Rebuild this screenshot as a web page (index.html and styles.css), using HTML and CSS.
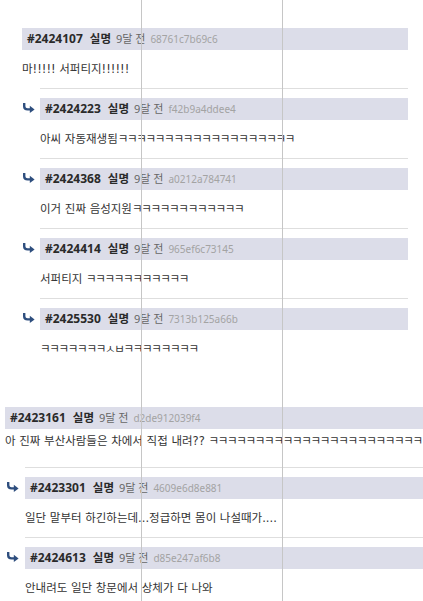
FILE: index.html
```html
<!DOCTYPE html>
<html lang="ko">
<head>
<meta charset="utf-8">
<title>댓글</title>
<link rel="stylesheet" href="styles.css">
</head>
<body>
<div class="page">

  <section class="thread thread--a">
    <article class="post">
      <div class="post-head"><span class="post-id">#2424107</span><span class="post-name">실명</span><span class="post-time">9달 전</span><span class="post-hash">68761c7b69c6</span></div>
      <p class="post-body">마!!!!! 서퍼티지!!!!!!</p>
    </article>

    <div class="reply">
      <svg class="reply-arrow" viewBox="0 0 13 10"><path d="M2.2 0.6 V3.2 Q2.2 6.4 5.6 6.4 H8.6" /><polygon points="7.8,2.8 12.6,6.4 7.8,10" /></svg>
      <article class="post">
        <div class="post-head"><span class="post-id">#2424223</span><span class="post-name">실명</span><span class="post-time">9달 전</span><span class="post-hash">f42b9a4ddee4</span></div>
        <p class="post-body">아씨 자동재생됨<span class="lol">ㅋㅋㅋㅋㅋㅋㅋㅋㅋㅋㅋㅋㅋㅋㅋㅋㅋㅋㅋ</span></p>
      </article>
    </div>

    <div class="reply">
      <svg class="reply-arrow" viewBox="0 0 13 10"><path d="M2.2 0.6 V3.2 Q2.2 6.4 5.6 6.4 H8.6" /><polygon points="7.8,2.8 12.6,6.4 7.8,10" /></svg>
      <article class="post">
        <div class="post-head"><span class="post-id">#2424368</span><span class="post-name">실명</span><span class="post-time">9달 전</span><span class="post-hash">a0212a784741</span></div>
        <p class="post-body">이거 진짜 음성지원<span class="lol">ㅋㅋㅋㅋㅋㅋㅋㅋㅋㅋㅋㅋ</span></p>
      </article>
    </div>

    <div class="reply">
      <svg class="reply-arrow" viewBox="0 0 13 10"><path d="M2.2 0.6 V3.2 Q2.2 6.4 5.6 6.4 H8.6" /><polygon points="7.8,2.8 12.6,6.4 7.8,10" /></svg>
      <article class="post">
        <div class="post-head"><span class="post-id">#2424414</span><span class="post-name">실명</span><span class="post-time">9달 전</span><span class="post-hash">965ef6c73145</span></div>
        <p class="post-body">서퍼티지 <span class="lol">ㅋㅋㅋㅋㅋㅋㅋㅋㅋㅋㅋ</span></p>
      </article>
    </div>

    <div class="reply">
      <svg class="reply-arrow" viewBox="0 0 13 10"><path d="M2.2 0.6 V3.2 Q2.2 6.4 5.6 6.4 H8.6" /><polygon points="7.8,2.8 12.6,6.4 7.8,10" /></svg>
      <article class="post">
        <div class="post-head"><span class="post-id">#2425530</span><span class="post-name">실명</span><span class="post-time">9달 전</span><span class="post-hash">7313b125a66b</span></div>
        <p class="post-body"><span class="lol">ㅋㅋㅋㅋㅋㅋㅋㅅㅂㅋㅋㅋㅋㅋㅋㅋㅋ</span></p>
      </article>
    </div>
  </section>

  <section class="thread thread--b">
    <article class="post">
      <div class="post-head"><span class="post-id">#2423161</span><span class="post-name">실명</span><span class="post-time">9달 전</span><span class="post-hash">d2de912039f4</span></div>
      <p class="post-body post-body--high">아 진짜 부산사람들은 차에서 직접 내려?? <span class="lol">ㅋㅋㅋㅋㅋㅋㅋㅋㅋㅋㅋㅋㅋㅋㅋㅋㅋㅋㅋㅋㅋㅋㅋ</span></p>
    </article>

    <div class="reply">
      <svg class="reply-arrow" viewBox="0 0 13 10"><path d="M2.2 0.6 V3.2 Q2.2 6.4 5.6 6.4 H8.6" /><polygon points="7.8,2.8 12.6,6.4 7.8,10" /></svg>
      <article class="post">
        <div class="post-head"><span class="post-id">#2423301</span><span class="post-name">실명</span><span class="post-time">9달 전</span><span class="post-hash">4609e6d8e881</span></div>
        <p class="post-body">일단 말부터 하긴하는데...정급하면 몸이 나설때가....</p>
      </article>
    </div>

    <div class="reply">
      <svg class="reply-arrow" viewBox="0 0 13 10"><path d="M2.2 0.6 V3.2 Q2.2 6.4 5.6 6.4 H8.6" /><polygon points="7.8,2.8 12.6,6.4 7.8,10" /></svg>
      <article class="post">
        <div class="post-head"><span class="post-id">#2424613</span><span class="post-name">실명</span><span class="post-time">9달 전</span><span class="post-hash">d85e247af6b8</span></div>
        <p class="post-body">안내려도 일단 창문에서 상체가 다 나와</p>
      </article>
    </div>
  </section>

  <div class="guide guide--left"></div>
  <div class="guide guide--right"></div>
</div>
</body>
</html>
```

FILE: styles.css
```css
html, body {
  margin: 0;
  background: #ffffff;
}

body {
  font-family: "Noto Sans", "Noto Sans CJK KR", sans-serif;
  color: #333333;
}

.page {
  position: relative;
  height: 601px;
  padding-top: 28px;
  box-sizing: border-box;
  overflow: hidden;
}

/* comment threads */
.thread--a {
  margin-left: 22px;
  width: 386px;
}

.thread--b {
  margin-left: 5px;
  margin-top: 39px;
  width: 418px;
}

/* post header bar */
.post-head {
  height: 22px;
  display: flex;
  align-items: baseline;
  padding-left: 5px;
  line-height: 22px;
  background: #dcdde9;
  white-space: nowrap;
  overflow: hidden;
}

.post-id {
  font-size: 12px;
  font-weight: 700;
  color: #2a2a2a;
  margin-right: 7px;
}

.post-name {
  font-size: 11.5px;
  font-weight: 700;
  color: #2a2a2a;
  margin-right: 5px;
}

.post-time {
  font-size: 11px;
  color: #666666;
  margin-right: 5px;
}

.post-hash {
  font-size: 10px;
  color: #a3a3a3;
}

/* post text */
.post-body {
  margin: 0;
  height: 38px;
  box-sizing: border-box;
  padding-top: 11px;
  line-height: 17px;
  font-family: "DejaVu Sans", "Noto Sans CJK KR", sans-serif;
  font-size: 11.5px;
  color: #333333;
  white-space: nowrap;
  overflow: hidden;
}

.post-body--high {
  padding-top: 4px;
}

/* runs of ㅋ sit a little tighter than syllables */
.lol {
  letter-spacing: -1.3px;
}

/* replies: arrow column + post */
.reply {
  display: grid;
  grid-template-columns: 18px 1fr;
}

.thread--b .reply {
  grid-template-columns: 20px 1fr;
}

.reply .post {
  border-top: 1px solid #dedede;
  padding-top: 9px;
}

.reply-arrow {
  width: 13px;
  height: 10px;
  margin-top: 15px;
}

.thread--b .reply-arrow {
  margin-left: 1px;
}

.reply-arrow path {
  fill: none;
  stroke: #2e4e7e;
  stroke-width: 2.4;
  stroke-linecap: round;
}

.reply-arrow polygon {
  fill: #2e4e7e;
}

/* vertical ruler lines drawn over the page */
.guide {
  position: absolute;
  top: 0;
  bottom: 0;
  width: 1px;
  background: #c6c6c6;
}

.guide--left {
  left: 141px;
}

.guide--right {
  left: 282px;
}
```
